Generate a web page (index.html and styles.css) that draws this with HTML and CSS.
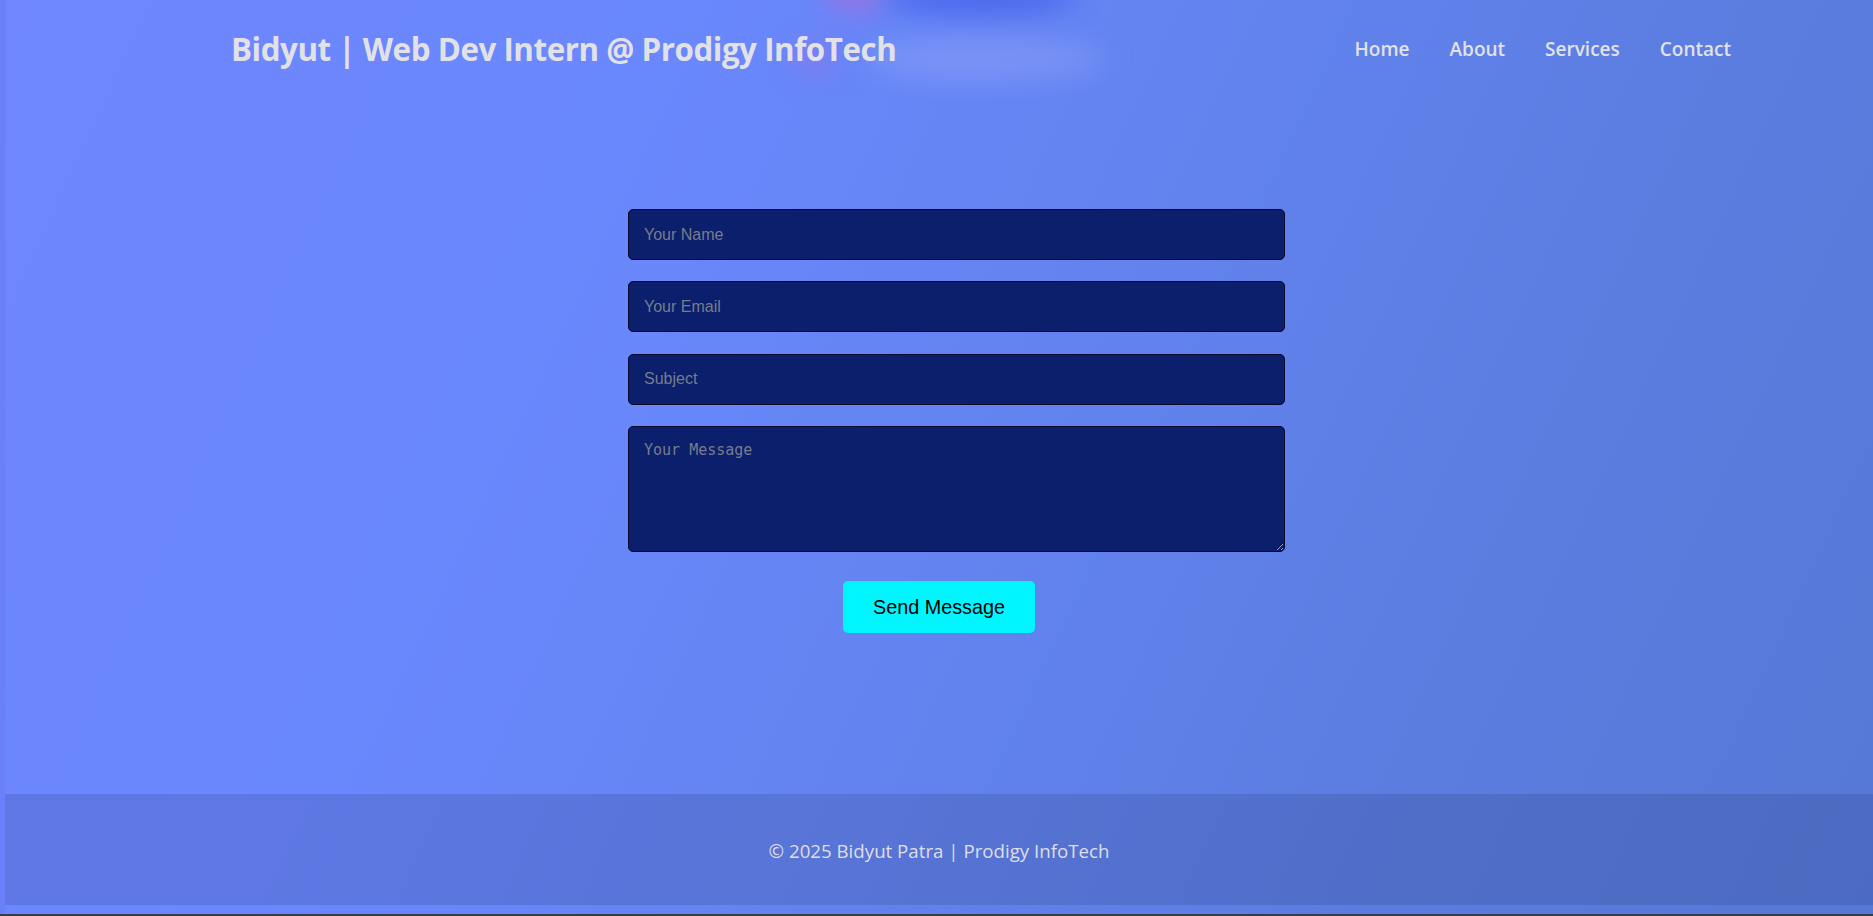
FILE: index.html
```html
<!DOCTYPE html>
<html lang="en">
<head>
<meta charset="utf-8">
<title>Contact | Bidyut</title>
<link rel="stylesheet" href="styles.css">
</head>
<body>
<div class="page">
  <header class="site-header">
    <div class="blob blob-pink"></div>
    <div class="blob blob-dark"></div>
    <div class="blob blob-pink2"></div>
    <div class="blob blob-light"></div>
    <h1 class="brand">Bidyut | Web Dev Intern @ Prodigy InfoTech</h1>
    <nav class="nav">
      <a href="#" class="nav-link">Home</a>
      <a href="#" class="nav-link">About</a>
      <a href="#" class="nav-link">Services</a>
      <a href="#" class="nav-link">Contact</a>
    </nav>
  </header>
  <main class="content">
    <form class="contact-form">
      <input class="field" type="text" placeholder="Your Name">
      <input class="field" type="email" placeholder="Your Email">
      <input class="field" type="text" placeholder="Subject">
      <textarea class="field field-area" placeholder="Your Message"></textarea>
    </form>
    <div class="actions">
      <button class="send-btn" type="button">Send Message</button>
    </div>
  </main>
  <footer class="site-footer">
    <p class="footer-text">© 2025 Bidyut Patra | Prodigy InfoTech</p>
  </footer>
  <div class="bottom-gap"></div>
</div>
</body>
</html>
```

FILE: styles.css
```css
html {
  background: #3a3b48;
}
body {
  margin: 0;
  height: 914px;
  background: #6a80f9;
  overflow: hidden;
}
.page {
  margin-left: 5px;
  height: 914px;
  display: flex;
  flex-direction: column;
  background: linear-gradient(115deg, #6f86ff 0%, #6a88fd 30%, #6283ee 55%, #5a7cde 80%, #5678d6 100%);
}
.site-header {
  position: relative;
  height: 98px;
  flex: none;
  display: flex;
  align-items: center;
  justify-content: space-between;
  padding: 0 142px 0 226px;
  overflow: hidden;
}
.blob {
  position: absolute;
  border-radius: 50%;
  filter: blur(14px);
  pointer-events: none;
}
.blob-pink {
  left: 820px;
  top: -30px;
  width: 60px;
  height: 42px;
  background: rgba(190, 100, 210, 0.55);
}
.blob-dark {
  left: 880px;
  top: -30px;
  width: 190px;
  height: 48px;
  background: rgba(70, 95, 235, 0.7);
}
.blob-pink2 {
  left: 790px;
  top: 42px;
  width: 40px;
  height: 32px;
  background: rgba(170, 110, 220, 0.4);
}
.blob-light {
  left: 860px;
  top: 34px;
  width: 240px;
  height: 50px;
  background: rgba(140, 160, 250, 0.5);
}
.brand {
  position: relative;
  margin: 0;
  font-family: "Open Sans", "Noto Sans", sans-serif;
  font-weight: 700;
  font-size: 31.3px;
  letter-spacing: -0.45px;
  color: #e2e2e6;
}
.nav {
  position: relative;
  display: flex;
  gap: 40px;
}
.nav-link {
  font-family: "Open Sans", "Noto Sans", sans-serif;
  font-weight: 600;
  font-size: 19px;
  color: #e2e2e6;
  text-decoration: none;
}
.content {
  flex: 1;
  padding-top: 111px;
  display: flex;
  flex-direction: column;
}
.contact-form {
  width: 657px;
  margin-left: 623px;
  display: flex;
  flex-direction: column;
  gap: 21.4px;
}
.field {
  box-sizing: border-box;
  width: 100%;
  height: 51px;
  margin: 0;
  padding: 0 15px;
  border: 1px solid #05082a;
  border-radius: 5px;
  background: #0b1f6c;
  color: #ddd;
  font-family: "Liberation Sans", Arial, sans-serif;
  font-size: 16px;
  outline: none;
}
.field::placeholder {
  color: #777c8c;
}
.field-area {
  height: 126px;
  padding: 14px 15px;
  font-family: "DejaVu Sans Mono", "Liberation Mono", monospace;
  font-size: 15px;
  resize: vertical;
  display: block;
}
.actions {
  display: flex;
  justify-content: center;
  padding-top: 29px;
}
.send-btn {
  width: 192px;
  height: 52px;
  border: none;
  border-radius: 5px;
  background: #00f6ff;
  color: #000;
  font-family: "Liberation Sans", Arial, sans-serif;
  font-size: 19.8px;
  cursor: pointer;
}
.site-footer {
  flex: none;
  height: 111px;
  display: flex;
  align-items: center;
  justify-content: center;
  background: rgba(10, 10, 40, 0.12);
}
.footer-text {
  margin: 0;
  padding-top: 1px;
  font-family: "Open Sans", "Noto Sans", sans-serif;
  font-size: 18.7px;
  color: #dedfe8;
}
.bottom-gap {
  flex: none;
  height: 9px;
}
```
